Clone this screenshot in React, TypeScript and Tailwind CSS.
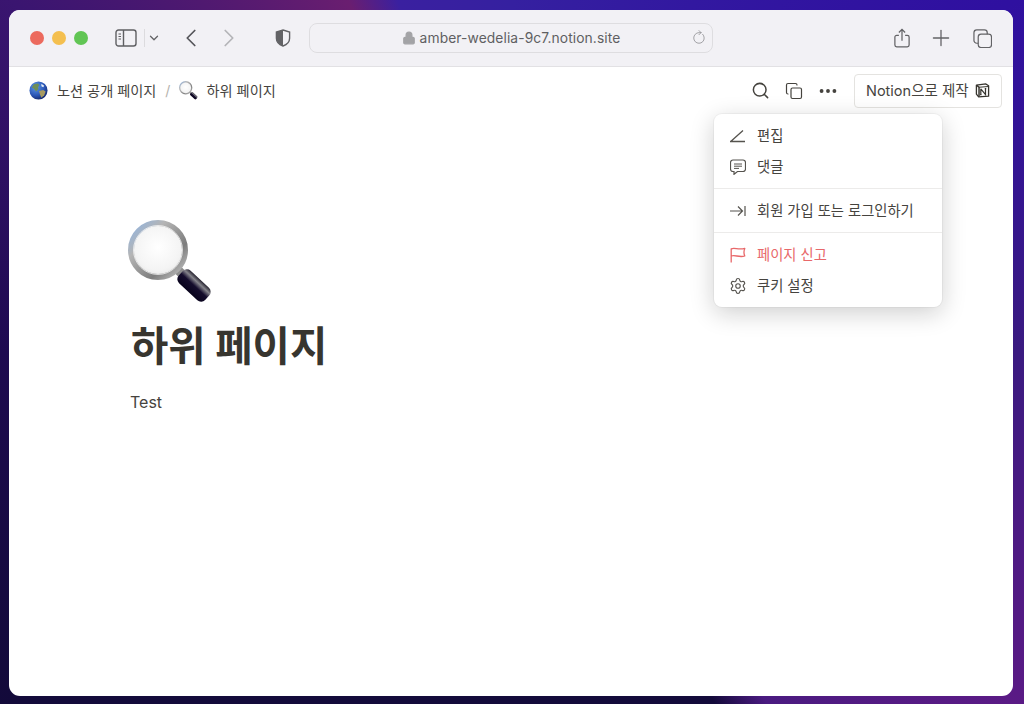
import { FC } from "react";
import { ChevronDown, ChevronLeft, ChevronRight, Copy, Ellipsis, Lock, Plus, RotateCw, Search, Settings } from "lucide-react";

const Globe: FC<{ className?: string }> = ({ className }) => (
  <svg viewBox="0 0 20 20" className={className}>
    <defs>
      <radialGradient id="sea" cx="35%" cy="30%" r="80%">
        <stop offset="0%" stopColor="#5f9be8" />
        <stop offset="60%" stopColor="#2a55b5" />
        <stop offset="100%" stopColor="#101f5c" />
      </radialGradient>
    </defs>
    <circle cx="10" cy="10" r="9.5" fill="url(#sea)" />
    <path d="M5 3.500 9 2.500 11 4 9.500 6.500 10 8.500 7.500 11 5 8 3 7Z" fill="#6f8f58" />
    <path d="M10.500 10.500 15 9.500 17.500 11 16 15 13 17.500 11.500 14Z" fill="#a79a60" />
    <path d="M13 3 16 5 15 6.500 13 5.500Z" fill="#e7eef7" />
  </svg>
);

// the magnifying glass emoji, used in the breadcrumb and above the title
const Magnifier: FC<{ className?: string; id: string }> = ({ className, id }) => (
  <svg viewBox="0 0 85 84" className={className}>
    <defs>
      <radialGradient id={`${id}-glass`} cx="50%" cy="45%" r="60%">
        <stop offset="0%" stopColor="#ffffff" />
        <stop offset="70%" stopColor="#f4f4f4" />
        <stop offset="100%" stopColor="#e2e2e2" />
      </radialGradient>
      <linearGradient id={`${id}-rim`} x1="0" y1="0" x2="1" y2="1">
        <stop offset="0%" stopColor="#8fb4e2" />
        <stop offset="30%" stopColor="#b5b5b5" />
        <stop offset="70%" stopColor="#7d7d7d" />
        <stop offset="100%" stopColor="#c8c8c8" />
      </linearGradient>
      <linearGradient id={`${id}-handle`} x1="0" y1="1" x2="0" y2="0">
        <stop offset="0%" stopColor="#08031c" />
        <stop offset="50%" stopColor="#140c2c" />
        <stop offset="78%" stopColor="#86858c" />
        <stop offset="100%" stopColor="#25222f" />
      </linearGradient>
    </defs>
    <path d="M49 49 58 58" stroke="#8d8d8d" strokeWidth="9" />
    <g transform="translate(66 65.5) rotate(43)">
      <rect x="-18" y="-8.500" width="36" height="17" rx="5.500" fill={`url(#${id}-handle)`} />
    </g>
    <circle cx="30" cy="30" r="27" fill={`url(#${id}-glass)`} stroke={`url(#${id}-rim)`} strokeWidth="6" />
    <circle cx="30" cy="30" r="24.500" fill="none" stroke="#ffffff" strokeOpacity="0.7" strokeWidth="1" />
  </svg>
);

const SidebarIcon = () => (
  <svg viewBox="0 0 22 18" className="h-[18px] w-[22px]" fill="none" stroke="#5f5f62" strokeWidth="1.4">
    <rect x="1" y="1" width="20" height="16" rx="2.500" />
    <path d="M8.500 1v16" />
    <path d="M3.500 5h2.500M3.500 7.500h2.500M3.500 10h2.500" strokeWidth="1.200" />
  </svg>
);

const ShieldIcon = () => (
  <svg viewBox="0 0 16 18" className="h-[18px] w-4">
    <path d="M8 1 14.600 3v6.200c0 4-3.400 6.600-6.600 7.800-3.200-1.200-6.600-3.800-6.600-7.800V3Z" fill="#f2f1f5" stroke="#636366" strokeWidth="1.400" />
    <path d="M8 1 1.400 3v6.200c0 4 3.400 6.600 6.600 7.800Z" fill="#636366" />
  </svg>
);

const ShareIcon = () => (
  <svg viewBox="0 0 18 22" className="h-5 w-4" fill="none" stroke="#636366" strokeWidth="1.400">
    <path d="M5.500 8H3a2 2 0 0 0-2 2v9a2 2 0 0 0 2 2h12a2 2 0 0 0 2-2v-9a2 2 0 0 0-2-2h-2.500" />
    <path d="M9 14V1.500M5.500 4.800 9 1.300l3.500 3.500" />
  </svg>
);

const TabsIcon = () => (
  <svg viewBox="0 0 20 20" className="h-[19px] w-[19px]" fill="none" stroke="#636366" strokeWidth="1.300">
    <rect x="5.500" y="5.500" width="14" height="14" rx="3" />
    <path d="M5.500 15H4a3 3 0 0 1-3-3V4a3 3 0 0 1 3-3h8a3 3 0 0 1 3 3v1.500" />
  </svg>
);

const NotionLogo = () => (
  <svg viewBox="0 0 16 16" className="h-[15px] w-[15px]">
    <path d="M1.500 2.200 11.600 1l2.900 2v11l-10.600.8-2.400-3Z" fill="#fff" stroke="#37352f" strokeWidth="1.400" strokeLinejoin="round" />
    <path d="M2 2.500 4.300 4.600V14.500" fill="none" stroke="#37352f" strokeWidth="1.600" />
    <path d="M4.300 4.600 14.300 3.800" stroke="#37352f" strokeWidth="1.200" />
    <path d="M6.200 6.200v6M6.200 6.200l5 6.200V6M5.400 12.400h1.600M10.400 6h1.600" fill="none" stroke="#37352f" strokeWidth="1.300" />
  </svg>
);

const EditIcon = () => (
  <svg viewBox="0 0 16 16" className="h-4 w-4" fill="none" stroke="#55534e" strokeWidth="1.300">
    <path d="M0 13.500h15M1 13.200 13 2.500" />
  </svg>
);

const CommentIcon = () => (
  <svg viewBox="0 0 16 16" className="h-4 w-4" fill="none" stroke="#55534e" strokeWidth="1.200">
    <path d="M3 1h10a2.500 2.500 0 0 1 2.500 2.500v6.500a2.500 2.500 0 0 1-2.500 2.500H7.500L4 15.300v-2.800H3A2.500 2.500 0 0 1 .5 10V3.500A2.500 2.500 0 0 1 3 1Z" />
    <path d="M4 5h8M4 7.200h8M4 9.400h5" strokeWidth="1" />
  </svg>
);

const LoginIcon = () => (
  <svg viewBox="0 0 16 16" className="h-4 w-4" fill="none" stroke="#55534e" strokeWidth="1.200">
    <path d="M0 8h12M8 3.500 12.500 8 8 12.500M15 3v10" />
  </svg>
);

const FlagIcon = () => (
  <svg viewBox="0 0 16 16" className="h-4 w-4" fill="none" stroke="#e8686a" strokeWidth="1.300">
    <path d="M1.200 15.500V1.800C5 .2 8 3.200 14.800 1.400c-1.200 2.800-1.200 5 0 7.600-6 1.800-9.800-1.600-13.600 0" strokeLinejoin="round" />
  </svg>
);

const MenuRow: FC<{ icon: React.ReactNode; label: string; danger?: boolean }> = ({ icon, label, danger }) => (
  <div className={`flex h-[31px] items-center gap-[11px] px-4 text-[14.3px] ${danger ? "text-[#e8686a]" : "text-[#45433e]"}`}>
    <span className="flex h-4 w-4 items-center justify-center">{icon}</span>
    <span>{label}</span>
  </div>
);

export default function App() {
  return (
    <div className="relative h-[704px] w-[1024px] overflow-hidden bg-[conic-gradient(#3520a0_0deg,#2f10a0_55deg,#3a1a80_90deg,#5a1a85_125deg,#4a1a80_144deg,#130a3a_150deg,#130a3a_235deg,#1e0a50_270deg,#3a1570_305deg,#6a1e70_335deg,#3a20a0_342deg,#3520a0_360deg)] pl-[9px] pt-[10px] font-['Inter','Noto_Sans_CJK_KR',sans-serif]">
      <div className="flex h-[686px] w-[1004px] flex-col overflow-hidden rounded-[11px] bg-white">
        {/* Safari toolbar */}
        <div className="flex h-[57px] shrink-0 items-center border-b border-[#e2e1e4] bg-[#f2f1f5] pl-[21px] pr-[21px]">
          <div className="flex gap-[8px]">
            <span className="h-[14px] w-[14px] rounded-full bg-[#ec6a5e]" />
            <span className="h-[14px] w-[14px] rounded-full bg-[#f4bf4f]" />
            <span className="h-[14px] w-[14px] rounded-full bg-[#61c554]" />
          </div>
          <div className="ml-[27px] flex items-center">
            <SidebarIcon />
            <span className="ml-[7px] h-[18px] w-px bg-[#dcdbde]" />
            <ChevronDown className="ml-[2px] h-[14px] w-[14px] text-[#636366]" strokeWidth={2.2} />
          </div>
          <ChevronLeft className="ml-[15px] h-[30px] w-[30px] text-[#55555a]" strokeWidth={1.4} />
          <ChevronRight className="ml-[8px] h-[30px] w-[30px] text-[#b4b4b8]" strokeWidth={1.4} />
          <div className="ml-[31px]">
            <ShieldIcon />
          </div>
          <div className="relative ml-[18px] flex h-[30px] w-[404px] items-center justify-center rounded-[8px] border border-[#dedde0] text-[#5f5f62]">
            <Lock className="mr-[4px] h-[14px] w-[14px] fill-[#a3a3a6] text-[#a3a3a6]" />
            <span className="text-[13.8px] tracking-[0.1px]">amber-wedelia-9c7.notion.site</span>
            <RotateCw className="absolute right-[6px] h-[14px] w-[14px] -rotate-45 text-[#8e8e92]" strokeWidth={1.3} />
          </div>
          <div className="ml-auto flex items-center">
            <ShareIcon />
            <Plus className="ml-[18px] h-[26px] w-[26px] text-[#636366]" strokeWidth={1.2} />
            <span className="ml-[19px]">
              <TabsIcon />
            </span>
          </div>
        </div>

        {/* Notion top bar */}
        <div className="flex h-[47px] shrink-0 items-center pl-[20px] pr-[11px] text-[14.2px] text-[#45433e]">
          <Globe className="h-[19px] w-[19px]" />
          <span className="ml-[9px]">노션 공개 페이지</span>
          <span className="ml-[9px] text-[#b5b3ae]">/</span>
          <Magnifier id="crumb" className="ml-[9px] h-[19px] w-[19px]" />
          <span className="ml-[8px]">하위 페이지</span>
          <div className="ml-auto flex items-center">
            <Search className="h-[19px] w-[19px]" strokeWidth={1.9} />
            <Copy className="ml-[15px] h-[18px] w-[18px]" strokeWidth={1.6} />
            <Ellipsis className="ml-[14px] h-[22px] w-[22px]" strokeWidth={2.2} />
            <div className="ml-[15px] flex h-[34px] w-[148px] items-center gap-[6px] rounded-[4px] border border-[#e4e3e0] pl-[11px] text-[14.5px]">
              <span>Notion으로 제작</span>
              <NotionLogo />
            </div>
          </div>
        </div>

        {/* Page body */}
        <div className="pl-[119px] pt-[106px]">
          <Magnifier id="hero" className="h-[84px] w-[85px]" />
          <h1 className="ml-[3px] mt-[17px] text-[40.6px] font-bold leading-[52px] text-[#37352f]">하위 페이지</h1>
          <p className="ml-[2px] mt-[17px] text-base leading-6 text-[#45433e]">Test</p>
        </div>
      </div>

      {/* Open dropdown menu */}
      <div className="absolute left-[714px] top-[114px] w-[228px] rounded-[8px] bg-white py-[6px] shadow-[0_0_0_1px_rgba(15,15,15,0.04),0_6px_24px_rgba(15,15,15,0.2)]">
        <MenuRow icon={<EditIcon />} label="편집" />
        <MenuRow icon={<CommentIcon />} label="댓글" />
        <div className="my-[6px] h-px bg-[#ecebea]" />
        <MenuRow icon={<LoginIcon />} label="회원 가입 또는 로그인하기" />
        <div className="my-[6px] h-px bg-[#ecebea]" />
        <MenuRow icon={<FlagIcon />} label="페이지 신고" danger />
        <MenuRow icon={<Settings className="h-[18px] w-[18px] shrink-0 text-[#55534e]" strokeWidth={1.5} />} label="쿠키 설정" />
      </div>
    </div>
  );
}
